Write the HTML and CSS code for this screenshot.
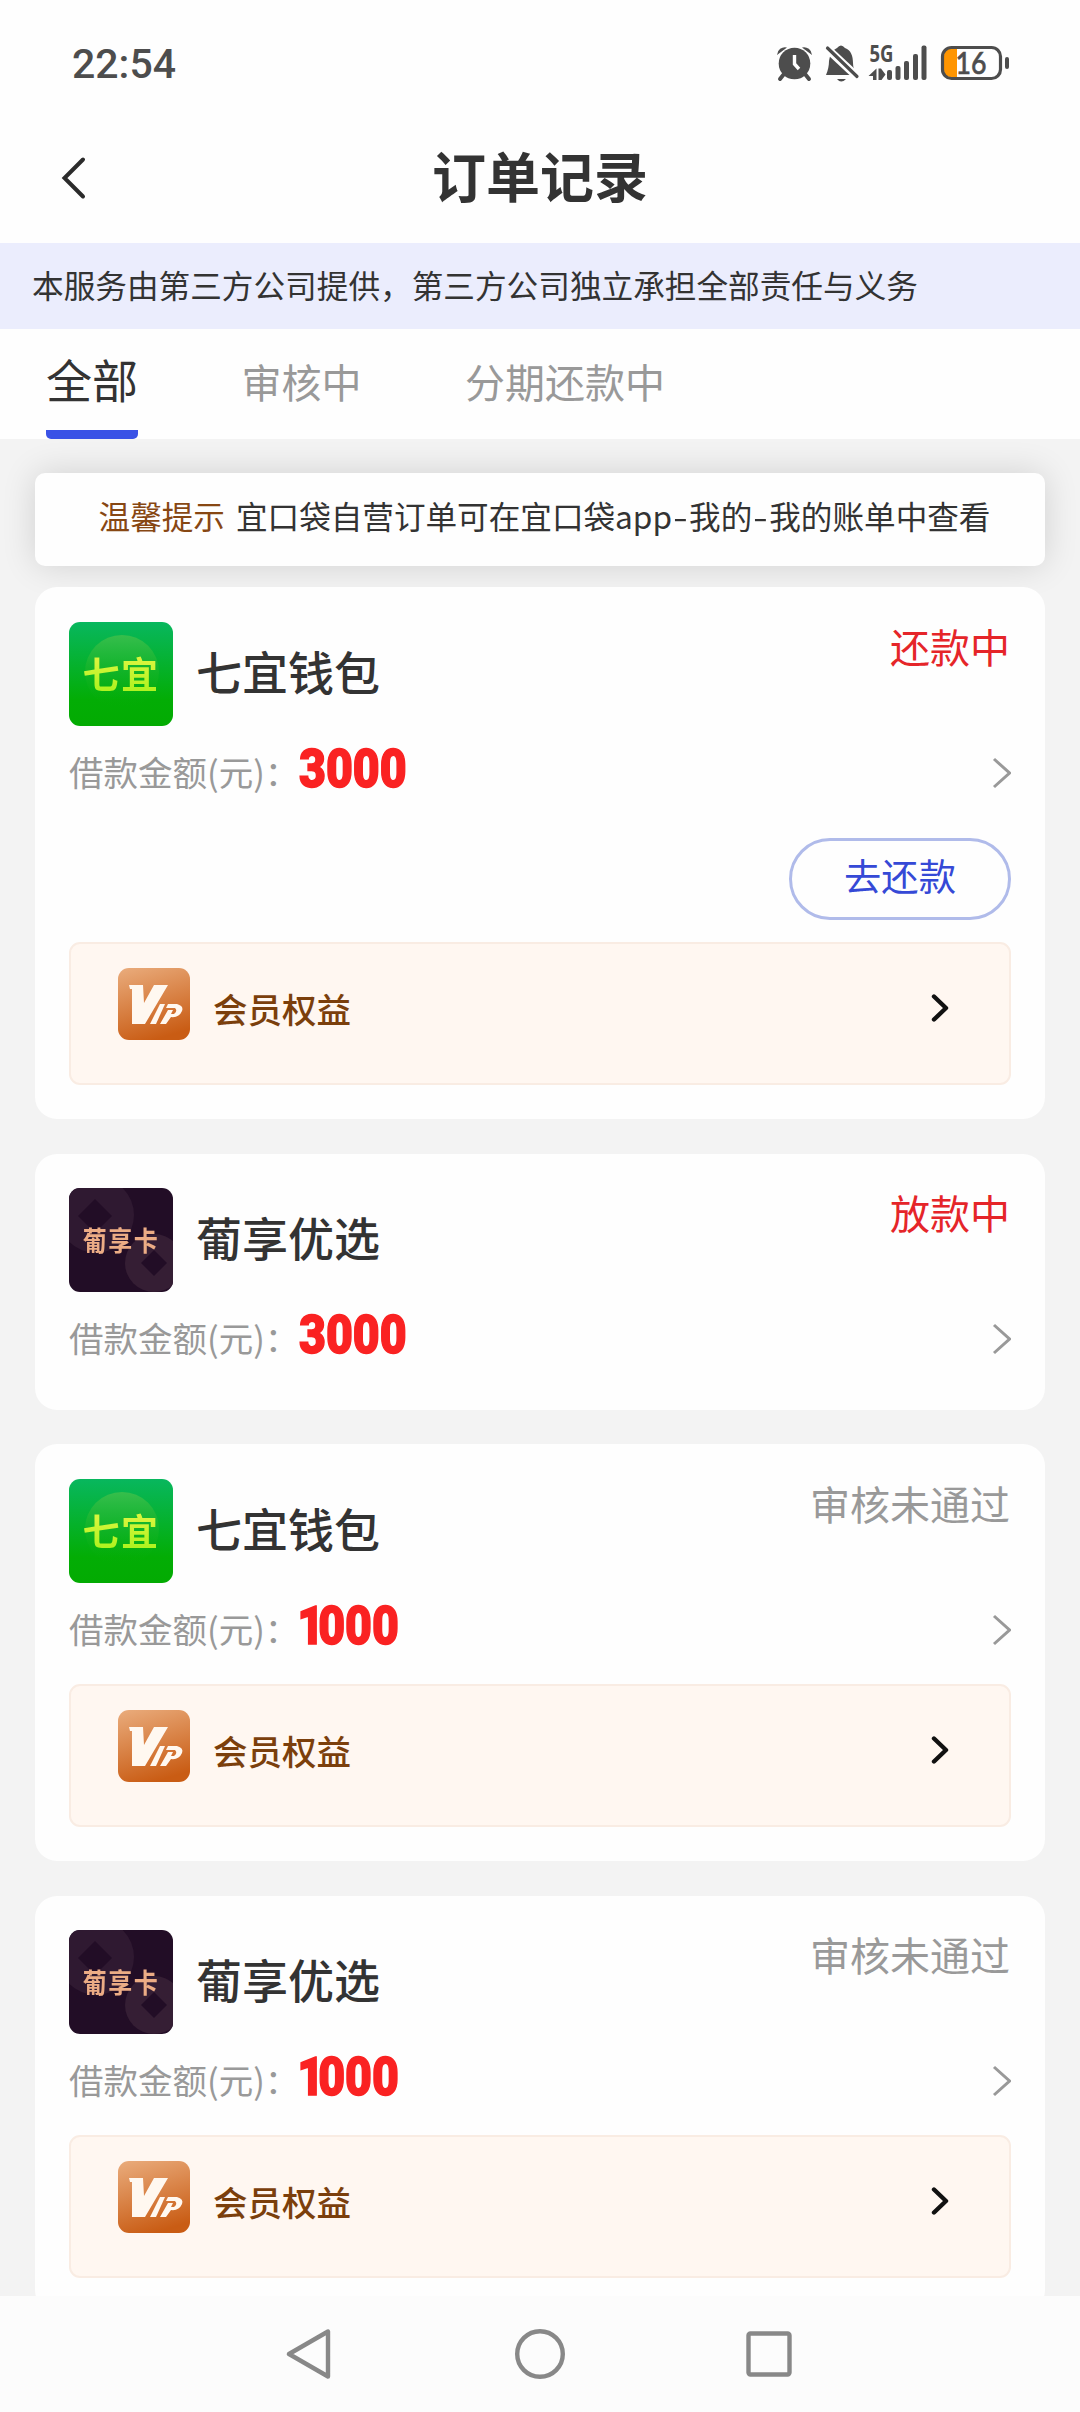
FILE: index.html
```html
<!DOCTYPE html>
<html lang="zh-CN">
<head>
<meta charset="utf-8">
<title>订单记录</title>
<link rel="stylesheet" href="styles.css">
</head>
<body>
<svg class="defs" width="0" height="0" aria-hidden="true">
  <defs>
    <linearGradient id="green" x1="0" y1="0" x2="0" y2="1"><stop offset="0" stop-color="#08b75e"/><stop offset=".75" stop-color="#03ad05"/><stop offset="1" stop-color="#03ab02"/></linearGradient>
    <linearGradient id="glow" x1="0" y1="0" x2="0" y2="1"><stop offset="0" stop-color="#37be4c"/><stop offset="1" stop-color="#03ad05" stop-opacity="0"/></linearGradient>
    <linearGradient id="copper" x1=".2" y1="0" x2=".5" y2="1"><stop offset="0" stop-color="#e8a877"/><stop offset="1" stop-color="#c95c14"/></linearGradient>
  </defs>
  <symbol id="next" viewBox="0 0 20 32"><path d="M3 2 18.500 16 3 30" fill="none" stroke="#999" stroke-width="3"/></symbol>
  <symbol id="go" viewBox="0 0 20 32"><path d="M5 4.500 17 16 5 27.500" fill="none" stroke="#111" stroke-width="4.400" stroke-linecap="round" stroke-linejoin="round"/></symbol>
  <symbol id="vip" viewBox="0 0 72 72">
    <rect width="72" height="72" rx="11" fill="url(#copper)"/>
    <path d="M11 17H25L26 35 36 17H50L27 56H14V21H12Z" fill="#fff8f0"/>
    <path d="M42 36H47L38 56H32Z" fill="#fff8f0"/>
    <path d="M50 36H59Q66 38 64 43 61 50 53 49L48 56H42L50 42H55L53 46H56Q60 43 57 40H48Z" fill="#fff8f0"/>
  </symbol>
  <symbol id="qiyi" viewBox="0 0 104 104">
    <rect width="104" height="104" rx="11" fill="url(#green)"/>
    <circle cx="53" cy="50" r="37" fill="url(#glow)"/>
  </symbol>
  <symbol id="puxiang" viewBox="0 0 104 104">
    <clipPath id="tile"><rect width="104" height="104" rx="11"/></clipPath>
    <g clip-path="url(#tile)">
      <rect width="104" height="104" fill="#220d26"/>
      <circle cx="27" cy="27" r="38" fill="#2f1931"/>
      <path d="M26 11 43 28 26 45 9 28Z" fill="#220d26"/>
      <circle cx="85" cy="75" r="29" fill="#351e34"/>
      <path d="M85 62 98 75 85 88 72 75Z" fill="#220d26"/>
    </g>
  </symbol>
</svg>

<div class="screen">
  <header class="status">
    <span class="time">22:54</span>
    <svg class="indicators" width="240" height="50" viewBox="770 38 240 50">
      <g fill="#4d4d4d" stroke="none">
        <circle cx="794.500" cy="63.500" r="15.800"/>
        <path d="M777 55A8 8 0 0 1 787 47.500Z M802 47.500A8 8 0 0 1 812 55Z"/>
        <path d="M784 74 780 79M805 74 809 79" stroke="#4d4d4d" stroke-width="4" stroke-linecap="round"/>
        <path d="M794.500 55V64L799 69" fill="none" stroke="#fff" stroke-width="3.400"/>
        <path d="M826 75C828 70 829 66 829 61 830 56 831 51 837 48Q841 43 845 48C851 50 853 56 853 63Q853 70 857 75Z"/>
        <path d="M826.500 48 857.500 77" stroke="#fff" stroke-width="8"/>
        <path d="M827.500 48 857 76.500" stroke="#4d4d4d" stroke-width="3.200" stroke-linecap="round"/>
        <path d="M837 79H846Q841 84 837 79Z"/>
        <rect x="887" y="70" width="5" height="10" rx="2"/><rect x="895.500" y="66" width="5" height="14" rx="2"/><rect x="904" y="61" width="5" height="19" rx="2"/><rect x="913" y="54" width="5" height="26" rx="2"/><rect x="921.500" y="45.500" width="5" height="34.500" rx="2"/>
        <path d="M868.500 76 876.500 68.500V80H873V76ZM878.500 68.500H881L885.500 74.500 881.500 80H878.500Z"/>
      </g>
      <text class="net" x="869.500" y="62" textLength="24" lengthAdjust="spacingAndGlyphs">5G</text>
      <path d="M957 48H950Q944 48 944 56V70Q944 77 950 77H957Z" fill="#ff9500"/>
      <rect x="942.500" y="47.500" width="58" height="31" rx="9" fill="none" stroke="#4d4d4d" stroke-width="3.200"/>
      <rect x="1005" y="57" width="4" height="12" rx="2" fill="#4d4d4d"/>
      <text class="battery" x="955.500" y="73.500" textLength="31" lengthAdjust="spacingAndGlyphs">16</text>
    </svg>
  </header>

  <div class="titlebar">
    <svg class="back" width="26" height="44" viewBox="0 0 26 44"><path d="M22 3.500 3.500 22 22 40.500" fill="none" stroke="#2b2b2b" stroke-width="4" stroke-linecap="round"/></svg>
    <h1>订单记录</h1>
  </div>

  <p class="banner">本服务由第三方公司提供，第三方公司独立承担全部责任与义务</p>

  <nav class="tabs">
    <span class="tab active">全部</span>
    <span class="tab">审核中</span>
    <span class="tab">分期还款中</span>
  </nav>

  <main>
    <p class="notice"><b>温馨提示</b><span>宜口袋自营订单可在宜口袋app<i class="dash">-</i>我的<i class="dash">-</i>我的账单中查看</span></p>

    <article class="card">
      <div class="head"><div class="logo qiyi"><svg><use href="#qiyi"/></svg><span>七宜</span></div><h2>七宜钱包</h2><span class="state hot">还款中</span></div>
      <div class="amount"><span class="label">借款金额(元)：</span><strong>3000</strong><svg class="next"><use href="#next"/></svg></div>
      <button class="repay">去还款</button>
      <div class="perk"><svg class="vip"><use href="#vip"/></svg><span>会员权益</span><svg class="go"><use href="#go"/></svg></div>
    </article>

    <article class="card plain">
      <div class="head"><div class="logo puxiang"><svg><use href="#puxiang"/></svg><span>葡享卡</span></div><h2>葡享优选</h2><span class="state hot">放款中</span></div>
      <div class="amount"><span class="label">借款金额(元)：</span><strong>3000</strong><svg class="next"><use href="#next"/></svg></div>
    </article>

    <article class="card">
      <div class="head"><div class="logo qiyi"><svg><use href="#qiyi"/></svg><span>七宜</span></div><h2>七宜钱包</h2><span class="state">审核未通过</span></div>
      <div class="amount"><span class="label">借款金额(元)：</span><strong class="one">1000</strong><svg class="next"><use href="#next"/></svg></div>
      <div class="perk"><svg class="vip"><use href="#vip"/></svg><span>会员权益</span><svg class="go"><use href="#go"/></svg></div>
    </article>

    <article class="card">
      <div class="head"><div class="logo puxiang"><svg><use href="#puxiang"/></svg><span>葡享卡</span></div><h2>葡享优选</h2><span class="state">审核未通过</span></div>
      <div class="amount"><span class="label">借款金额(元)：</span><strong class="one">1000</strong><svg class="next"><use href="#next"/></svg></div>
      <div class="perk"><svg class="vip"><use href="#vip"/></svg><span>会员权益</span><svg class="go"><use href="#go"/></svg></div>
    </article>
  </main>

  <footer class="keys">
    <svg width="50" height="54" viewBox="0 0 50 54" fill="none" stroke="#888" stroke-width="4.400" stroke-linejoin="round"><path d="M42 4.500V49.500L3 27Z"/></svg>
    <svg width="54" height="54" viewBox="0 0 54 54" fill="none" stroke="#888" stroke-width="4.400"><circle cx="27" cy="27" r="22.800"/></svg>
    <svg width="50" height="54" viewBox="0 0 50 54" fill="none" stroke="#888" stroke-width="4.400"><rect x="4.500" y="6.500" width="41" height="41" rx="2"/></svg>
  </footer>
</div>
</body>
</html>
```
FILE: styles.css
```css
* { box-sizing: border-box; margin: 0; padding: 0; }

body {
  width: 1080px;
  font-family: "Noto Sans CJK SC", sans-serif;
  color: #333;
  background: #f3f3f3;
}

.defs { position: absolute; }

.screen {
  display: flex;
  flex-direction: column;
  height: 2412px;
  overflow: hidden;
}

.status {
  flex: none;
  display: flex;
  justify-content: space-between;
  align-items: center;
  height: 126px;
  padding: 0 70px 0 72px;
  background: #fefefe;
}

.time {
  margin-top: 2px;
  font: 500 41px/48px Roboto, sans-serif;
  color: #4d4d4d;
}

.net { font: 700 23px "Open Sans", sans-serif; fill: #4d4d4d; }
.battery { font: 500 31px "Lato", sans-serif; fill: #4d4d4d; stroke: #4d4d4d; stroke-width: .6px; }

.titlebar {
  flex: none;
  display: grid;
  grid-template-columns: 1fr auto 1fr;
  align-items: center;
  height: 117px;
  padding: 0 61px 13px;
  background: #fefefe;
}

.titlebar h1 {
  padding-bottom: 6px;
  font-size: 54px;
  line-height: 80px;
  font-weight: 700;
}

.banner {
  flex: none;
  height: 86px;
  padding-left: 32px;
  font-size: 31.65px;
  line-height: 83px;
  white-space: nowrap;
  background: #ebedfd;
}

.tabs {
  flex: none;
  display: flex;
  align-items: stretch;
  gap: 103.5px;
  height: 110px;
  padding-left: 46px;
  background: #fefefe;
}

.tab { font-size: 40px; line-height: 104px; color: #999; }

.tab.active {
  font-size: 46px;
  line-height: 98px;
  color: #333;
  background: linear-gradient(#3a52e6, #3a52e6) bottom / 100% 9px no-repeat;
  border-radius: 0 0 5px 5px;
}

main {
  flex: 1;
  min-height: 0;
  display: flex;
  flex-direction: column;
  padding: 34px 35px 0;
  overflow: hidden;
}

.notice {
  flex: none;
  display: flex;
  justify-content: center;
  gap: 11px;
  height: 93px;
  margin-bottom: 21px;
  padding-left: 9px;
  border-radius: 10px;
  font-size: 31.6px;
  line-height: 84px;
  white-space: nowrap;
  background: #fefefe;
  box-shadow: 0 0 34px rgba(0, 0, 0, .14);
}

.notice b { font-weight: 400; color: #874713; }

.dash {
  display: inline-block;
  width: 17px;
  font-style: normal;
  text-align: center;
  transform: scaleX(1.35);
}

.card {
  position: relative;
  flex: none;
  display: flex;
  flex-direction: column;
  margin-bottom: 35px;
  padding: 35px 34px 34px;
  border-radius: 22px;
  background: #fefefe;
}

.card:nth-of-type(even) { padding-top: 34px; }
.card.plain { height: 256px; margin-bottom: 34px; }

.head { display: flex; flex: none; height: 104px; }
.head h2 { margin-left: 23px; font-size: 46px; font-weight: 500; line-height: 97px; }
.state { margin-left: auto; margin-right: 1px; font-size: 40px; line-height: 49px; color: #999; }
.state.hot { color: #e52529; }

.logo { display: grid; flex: none; width: 104px; height: 104px; }
.logo svg { grid-area: 1 / 1; width: 104px; height: 104px; }
.logo span {
  z-index: 1;
  grid-area: 1 / 1;
  place-self: center;
  white-space: nowrap;
}

.qiyi span {
  margin-top: -3px;
  font-size: 37px;
  font-weight: 700;
  line-height: 46px;
  letter-spacing: 1.500px;
  background: linear-gradient(#d8f53c 25%, #b0f320 85%);
  background-clip: text;
  -webkit-background-clip: text;
  color: transparent;
}

.puxiang span {
  margin-top: -2px;
  font-size: 24px;
  font-weight: 700;
  line-height: 30px;
  letter-spacing: 1.500px;
  color: #ecac85;
  transform: scaleY(1.15);
}

.amount { display: flex; flex: none; align-items: center; height: 94px; }
.label { width: 230px; margin-top: -4px; font-size: 34.5px; line-height: 50px; color: #999; white-space: nowrap; }

.amount strong {
  margin-top: -9px;
  font: 900 54px/60px Roboto, sans-serif;
  color: #fa2222;
  -webkit-text-stroke: 1.500px #fa2222;
  transform: scaleX(.86);
  transform-origin: left;
}

.amount .one::first-letter { margin-left: -2px; margin-right: -7px; }

.next { width: 20px; height: 32px; margin-left: auto; }

.repay {
  flex: none;
  align-self: flex-end;
  width: 222px;
  height: 82px;
  margin: 18px 0 15px;
  padding-bottom: 8px;
  border: 3px solid #b0bbea;
  border-radius: 41px;
  font: 400 37.300px/50px "Noto Sans CJK SC", sans-serif;
  color: #3549d6;
  background: transparent;
}

.perk {
  display: flex;
  flex: none;
  height: 143px;
  margin-top: 7px;
  padding: 24px 60px 0 47px;
  border: 2px solid #f9ece3;
  border-radius: 11px;
  background: #fff7f1;
}

.perk span { margin-left: 23px; font-size: 34.5px; font-weight: 500; line-height: 81px; color: #7b3f0c; }
.vip { width: 72px; height: 72px; }
.go { width: 20px; height: 32px; margin: 24px 0 0 auto; }

.keys {
  flex: none;
  display: flex;
  justify-content: center;
  gap: 177px;
  height: 116px;
  padding-top: 31px;
  background: #fcfcfc;
}
```
